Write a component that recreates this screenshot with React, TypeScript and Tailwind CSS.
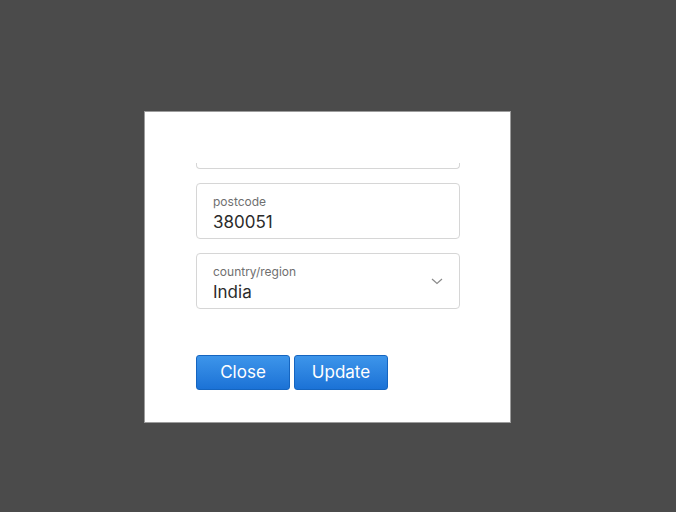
import React from "react";

const font = { fontFamily: "Inter, 'Helvetica Neue', Arial, sans-serif" };

function Field({ label, value, select }: { label: string; value: string; select?: boolean }) {
  return (
    <div className="relative h-[56px] w-[264px] rounded-[4px] border border-[#d6d6d6] bg-white pl-[16px] pt-[10px]">
      <div className="text-[12px] leading-[16px] text-[#6f6f6f]">{label}</div>
      <div className="mt-[1px] text-[17px] leading-[22px] text-[#2b2b2b]">{value}</div>
      {select && (
        <svg className="absolute right-[16px] top-[24px]" width="12" height="7" viewBox="0 0 12 7" fill="none">
          <path d="M1 1l5 4.5L11 1" stroke="#8a8a8a" strokeWidth="1.2" />
        </svg>
      )}
    </div>
  );
}

export default function App() {
  return (
    <div className="h-[512px] w-[676px] bg-[#4b4b4b] pl-[144px] pt-[111px]" style={font}>
      <div className="h-[312px] w-[367px] border border-[#9c9c9c] bg-white pl-[51px]">
        <div className="mt-[51px] h-[6px] w-[264px] rounded-b-[4px] border-x border-b border-[#d6d6d6]" />
        <div className="mt-[14px] flex flex-col gap-[14px]">
          <Field label="postcode" value="380051" />
          <Field label="country/region" value="India" select />
        </div>
        <div className="mt-[46px] flex gap-[4px]">
          <button className="h-[35px] w-[94px] rounded-[3px] border border-[#1565c0] bg-gradient-to-b from-[#3d95ea] to-[#1b72d6] text-[17px] text-white">
            Close
          </button>
          <button className="h-[35px] w-[94px] rounded-[3px] border border-[#1565c0] bg-gradient-to-b from-[#3d95ea] to-[#1b72d6] text-[17px] text-white">
            Update
          </button>
        </div>
      </div>
    </div>
  );
}
